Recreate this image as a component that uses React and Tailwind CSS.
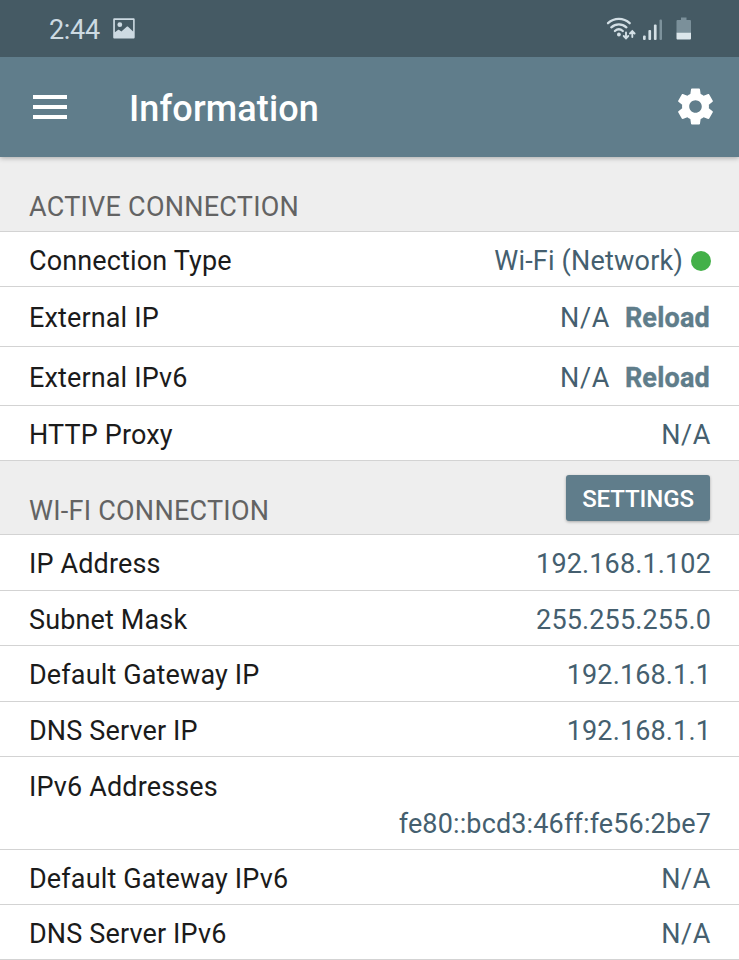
import React from "react";

function ImageIcon() {
  return (
    <svg className="h-[22px] w-[22px]" viewBox="0 0 22 22">
      <path
        fill="#cddae2"
        fillRule="evenodd"
        d="M1.5 0.3h18.9c.8 0 1.3.5 1.3 1.3v17.6c0 .8-.5 1.3-1.3 1.3H1.5c-.8 0-1.3-.5-1.3-1.3V1.6C.2.8.7.3 1.5.3zM1.9 1.9v12.4l3-2.3c.5-.4.9-.4 1.3 0l2.2 1.600 5.300-4.800c.5-.4 1-.4 1.400 0l5 4.600V1.900z"
      />
      <circle cx="6.800" cy="6.700" r="2.400" fill="#cddae2" />
    </svg>
  );
}

function WifiIcon() {
  return (
    <svg className="h-6 w-[30px]" viewBox="0 0 30 24" fill="none" stroke="#d3dfe5" strokeLinecap="round">
      <path strokeWidth="2.300" d="M2 6.200C8.200.4 17.500.4 23.700 6.200" />
      <path strokeWidth="2.300" d="M5.300 10.300c4.400-4 10.700-4 15.100 0" />
      <path strokeWidth="2.300" d="M8.900 14c2.400-2.200 5.500-2.200 7.900 0" />
      <circle cx="12.900" cy="17.500" r="1.900" fill="#d3dfe5" stroke="none" />
      <path strokeWidth="1.900" d="M20 15.500v5.500M17.700 19l2.300 2.300 2.300-2.300M26.300 20v-5.500M24 16.500l2.300-2.300 2.300 2.300" />
    </svg>
  );
}

function SignalIcon() {
  return (
    <svg className="h-[22px] w-5" viewBox="0 0 20 22" fill="#d3dfe5">
      <rect x="0" y="16.500" width="2.700" height="4.500" rx="1" />
      <rect x="5.400" y="11" width="2.700" height="10" rx="1" />
      <rect x="10.900" y="5.500" width="2.700" height="15.500" rx="1" />
      <rect x="16.500" y="0.500" width="2.500" height="20.500" rx="1" fill="#7d929c" />
    </svg>
  );
}

function BatteryIcon() {
  return (
    <svg className="h-[23px] w-4" viewBox="0 0 16 23">
      <path fill="#7b909a" d="M5 .5h5.500v2.500h3.300c.8 0 1.200.4 1.200 1.200V16H.500V4.200C.500 3.400.900 3 1.700 3H5z" />
      <path fill="#dce6eb" d="M.500 15.800H15v5.500c0 .8-.4 1.200-1.200 1.200H1.700c-.8 0-1.200-.4-1.200-1.200z" />
    </svg>
  );
}

function GearIcon() {
  return (
    <svg className="h-[43px] w-[43px]" viewBox="0 0 24 24" fill="#fff">
      <path d="M19.430 12.980c.04-.32.07-.64.07-.98s-.03-.66-.07-.98l2.110-1.650c.19-.15.24-.42.12-.64l-2-3.460c-.12-.22-.39-.3-.61-.22l-2.490 1c-.52-.4-1.080-.73-1.690-.98l-.38-2.650C14.460 2.180 14.250 2 14 2h-4c-.25 0-.46.18-.49.42l-.38 2.650c-.61.25-1.170.59-1.690.98l-2.490-1c-.23-.09-.49 0-.61.22l-2 3.460c-.13.22-.07.49.12.64l2.110 1.650c-.04.32-.07.65-.07.98s.03.66.07.98l-2.110 1.650c-.19.15-.24.42-.12.64l2 3.460c.12.22.39.3.61.22l2.490-1c.52.4 1.080.73 1.690.98l.38 2.650c.03.24.24.42.49.42h4c.25 0 .46-.18.49-.42l.38-2.650c.61-.25 1.170-.59 1.690-.98l2.490 1c.23.09.49 0 .61-.22l2-3.460c.12-.22.07-.49-.12-.64l-2.110-1.650zM12 15.500c-1.930 0-3.500-1.570-3.500-3.500s1.570-3.500 3.500-3.500 3.500 1.570 3.500 3.500-1.570 3.500-3.500 3.500z" />
    </svg>
  );
}

function Row({ label, height, children }) {
  return (
    <div className={`flex items-center justify-between border-b border-[#d3d3d3] bg-white pl-[29px] pr-7 pt-[3px] ${height}`}>
      <span className="text-[#1b1b1b]">{label}</span>
      <span className="flex items-center text-[#455f6f]">{children}</span>
    </div>
  );
}

function NotAvailable() {
  return <span className="tracking-[0.6px]">N/A</span>;
}

function Reload() {
  return <button className="ml-[15px] mr-px font-bold tracking-[0.2px] text-[#5f7d8a] [-webkit-text-stroke:0.4px_#5f7d8a]">Reload</button>;
}

export default function App() {
  return (
    <div className="flex h-[960px] w-[739px] flex-col overflow-hidden bg-white font-[Roboto,sans-serif] text-[27px] leading-8 tracking-[0.14px] *:shrink-0">
      <header className="z-10 shadow-[0_1px_5px_rgba(0,0,0,0.3)]">
        <div className="flex h-[57px] items-center bg-[#455a64] pl-[49px]">
          <span className="pt-0.5 text-[27px] tracking-[-0.3px] text-[#cddae2]">2:44</span>
          <div className="ml-[13px]"><ImageIcon /></div>
          <div className="ml-auto mr-[47px] flex items-center">
            <WifiIcon />
            <div className="ml-[7px] mt-[3px]"><SignalIcon /></div>
            <div className="ml-[13px]"><BatteryIcon /></div>
          </div>
        </div>
        <div className="flex h-[100px] items-center bg-[#607d8b] pl-[33px] pr-[22px]">
          <div className="flex w-[34px] flex-col gap-[6px]">
            <i className="h-1 bg-white" />
            <i className="h-1 bg-white" />
            <i className="h-1 bg-white" />
          </div>
          <h1 className="ml-[62px] pt-1 text-[36px] font-medium text-white">Information</h1>
          <div className="mb-[2px] ml-auto"><GearIcon /></div>
        </div>
      </header>
      <section className="flex h-[75px] items-end border-b border-[#d3d3d3] bg-[#eeeeee] px-[29px] pb-2">
        <h2 className="tracking-[0.25px] text-[#636363]">ACTIVE CONNECTION</h2>
      </section>
      <Row label="Connection Type" height="h-[55px]">
        <span className="tracking-[0.2px]">Wi-Fi (Network)</span>
        <i className="ml-2 size-5 rounded-full bg-[#43b048]" />
      </Row>
      <Row label="External IP" height="h-[60px]"><NotAvailable /><Reload /></Row>
      <Row label="External IPv6" height="h-[59px]"><NotAvailable /><Reload /></Row>
      <Row label="HTTP Proxy" height="h-[55px]"><NotAvailable /></Row>
      <section className="flex h-[74px] items-end justify-between border-b border-[#d3d3d3] bg-[#eeeeee] px-[29px]">
        <h2 className="pb-[7px] tracking-[0.25px] text-[#636363]">WI-FI CONNECTION</h2>
        <button className="mb-[13px] h-[46px] w-[144px] rounded-[3px] bg-[#607d8b] pt-0.5 text-2xl font-medium tracking-[-0.1px] text-white shadow-[0_1px_3px_rgba(0,0,0,0.3)]">
          SETTINGS
        </button>
      </section>
      <Row label="IP Address" height="h-14">192.168.1.102</Row>
      <Row label="Subnet Mask" height="h-[55px]">255.255.255.0</Row>
      <Row label="Default Gateway IP" height="h-14">192.168.1.1</Row>
      <Row label="DNS Server IP" height="h-[55px]">192.168.1.1</Row>
      <div className="flex h-[93px] flex-col border-b border-[#d3d3d3] pl-[29px] pr-7 pt-[14px]">
        <span className="text-[#1b1b1b]">IPv6 Addresses</span>
        <span className="mt-[5px] self-end text-[#455f6f]">fe80::bcd3:46ff:fe56:2be7</span>
      </div>
      <Row label="Default Gateway IPv6" height="h-[55px]"><NotAvailable /></Row>
      <Row label="DNS Server IPv6" height="h-[55px]"><NotAvailable /></Row>
    </div>
  );
}
